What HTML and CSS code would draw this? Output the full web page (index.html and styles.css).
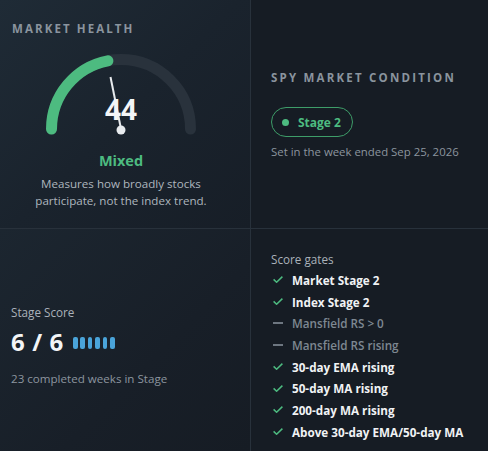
FILE: index.html
```html
<!DOCTYPE html>
<html>
<head>
<meta charset="utf-8">
<link rel="stylesheet" href="styles.css">
</head>
<body>
<div class="grid">
  <section class="cell health">
    <h2 class="eyebrow">MARKET HEALTH</h2>
    <div class="gauge">
      <svg width="160" height="90" viewBox="0 0 160 90">
        <path d="M10.5 82 A69.5 69.5 0 0 1 149.5 82" fill="none" stroke="#29323c" stroke-width="11" stroke-linecap="round"/>
        <path d="M10.5 82 A69.5 69.5 0 0 1 66.9 13.8" fill="none" stroke="#4dbb80" stroke-width="11" stroke-linecap="round"/>
        <line x1="80" y1="82" x2="69.5" y2="30" stroke="#e8ebee" stroke-width="2"/>
        <circle cx="80" cy="83" r="4.5" fill="#e8ebee"/>
      </svg>
      <div class="gauge-value">44</div>
    </div>
    <div class="mood">Mixed</div>
    <p class="desc">Measures how broadly stocks<br>participate, not the index trend.</p>
  </section>
  <section class="cell condition">
    <h2 class="eyebrow">SPY MARKET CONDITION</h2>
    <div class="badge"><span class="dot"></span>Stage 2</div>
    <p class="muted">Set in the week ended Sep 25, 2026</p>
  </section>
  <section class="cell score">
    <div class="label">Stage Score</div>
    <div class="score-row">
      <span class="score-num">6 / 6</span>
      <span class="pips"><i></i><i></i><i></i><i></i><i></i><i></i></span>
    </div>
    <p class="muted">23 completed weeks in Stage</p>
  </section>
  <section class="cell gates">
    <div class="label">Score gates</div>
    <ul class="gate-list">
      <li class="ok"><svg class="ic" width="10" height="7" viewBox="0 0 10 7"><path d="M0.6 3.4 L3.6 6.2 L9.4 0.6" fill="none" stroke="#4dbb80" stroke-width="1.5"/></svg>Market Stage 2</li>
      <li class="ok"><svg class="ic" width="10" height="7" viewBox="0 0 10 7"><path d="M0.6 3.4 L3.6 6.2 L9.4 0.6" fill="none" stroke="#4dbb80" stroke-width="1.5"/></svg>Index Stage 2</li>
      <li class="off"><span class="ic dash"></span>Mansfield RS &gt; 0</li>
      <li class="off"><span class="ic dash"></span>Mansfield RS rising</li>
      <li class="ok"><svg class="ic" width="10" height="7" viewBox="0 0 10 7"><path d="M0.6 3.4 L3.6 6.2 L9.4 0.6" fill="none" stroke="#4dbb80" stroke-width="1.5"/></svg>30-day EMA rising</li>
      <li class="ok"><svg class="ic" width="10" height="7" viewBox="0 0 10 7"><path d="M0.6 3.4 L3.6 6.2 L9.4 0.6" fill="none" stroke="#4dbb80" stroke-width="1.5"/></svg>50-day MA rising</li>
      <li class="ok"><svg class="ic" width="10" height="7" viewBox="0 0 10 7"><path d="M0.6 3.4 L3.6 6.2 L9.4 0.6" fill="none" stroke="#4dbb80" stroke-width="1.5"/></svg>200-day MA rising</li>
      <li class="ok"><svg class="ic" width="10" height="7" viewBox="0 0 10 7"><path d="M0.6 3.4 L3.6 6.2 L9.4 0.6" fill="none" stroke="#4dbb80" stroke-width="1.5"/></svg>Above 30-day EMA/50-day MA</li>
    </ul>
  </section>
</div>
</body>
</html>
```
FILE: styles.css
```css
* { box-sizing: border-box; }
html, body { margin: 0; padding: 0; }
body {
  width: 488px;
  height: 451px;
  background: #161c24;
  font-family: "Open Sans", "Noto Sans", sans-serif;
  color: #e8ebee;
  overflow: hidden;
}
.grid {
  display: grid;
  grid-template-columns: 251px 1fr;
  grid-template-rows: 229px 1fr;
  height: 451px;
}
.cell { margin: 0; }
.health {
  border-right: 1px solid #28313b;
  border-bottom: 1px solid #28313b;
  background: linear-gradient(135deg, #1f2b36 0%, #1a232d 50%, #171e27 100%);
  padding: 22px 20px 0 12px;
  display: flex;
  flex-direction: column;
  align-items: center;
}
.condition {
  border-bottom: 1px solid #28313b;
  padding: 71px 20px 0 20px;
}
.score {
  border-right: 1px solid #28313b;
  background: linear-gradient(135deg, #1c2630 0%, #181f28 60%, #161c24 100%);
  padding: 75px 11px 0 11px;
}
.gates {
  padding: 22px 20px 0 20px;
}
.eyebrow {
  margin: 0;
  font-size: 11.5px;
  font-weight: 700;
  letter-spacing: 2.1px;
  color: #8a949e;
  align-self: flex-start;
  line-height: 14px;
}
.condition .eyebrow { letter-spacing: 2.2px; }
.gauge {
  position: relative;
  width: 160px;
  height: 90px;
  margin-top: 11px;
}
.gauge svg { display: block; }
.gauge-value {
  position: absolute;
  left: 0;
  right: 0;
  top: 45px;
  text-align: center;
  font-size: 28px;
  font-weight: 700;
  line-height: 34px;
  color: #f3f5f7;
}
.mood {
  margin-top: 15px;
  font-size: 14.5px;
  font-weight: 700;
  color: #4dbb80;
  line-height: 18px;
}
.desc {
  margin: 5px 0 0 0;
  font-size: 11.6px;
  line-height: 17px;
  color: #aeb6be;
  text-align: center;
  white-space: nowrap;
}
.badge {
  margin-top: 22px;
  display: inline-flex;
  align-items: center;
  height: 30px;
  padding: 0 11px 0 10px;
  border: 1.5px solid #3e9d69;
  border-radius: 15px;
  font-size: 12px;
  font-weight: 700;
  color: #4dbb80;
}
.dot {
  width: 7px;
  height: 7px;
  border-radius: 50%;
  background: #4dbb80;
  margin-right: 9px;
}
.muted {
  margin: 6px 0 0 0;
  font-size: 11.4px;
  line-height: 18px;
  color: #8c959f;
  white-space: nowrap;
}
.label {
  font-size: 11.7px;
  line-height: 16px;
  color: #aab2ba;
  font-weight: 500;
}
.score-row {
  display: flex;
  align-items: center;
  margin-top: 7px;
}
.score-num {
  font-size: 24px;
  font-weight: 700;
  letter-spacing: 0.6px;
  line-height: 30px;
  color: #f3f5f7;
}
.pips {
  display: flex;
  gap: 2.8px;
  margin-left: 9px;
  margin-top: 1px;
}
.pips i {
  display: block;
  width: 4.7px;
  height: 12px;
  border-radius: 2px;
  background: #4aa4da;
}
.score .muted { margin-top: 13px; font-size: 11.6px; }
.gate-list {
  list-style: none;
  margin: 2px 0 0 0;
  padding: 0;
}
.gate-list li {
  display: flex;
  align-items: center;
  height: 21.7px;
  font-size: 11.7px;
  font-weight: 700;
  color: #f0f2f4;
}
.gate-list li.off {
  color: #7e8892;
  font-weight: 600;
}
.ic {
  flex: none;
  margin-left: 2px;
  margin-right: 9px;
}
.ic.dash {
  display: block;
  width: 10px;
  height: 2px;
  background: #6d7680;
}
```
